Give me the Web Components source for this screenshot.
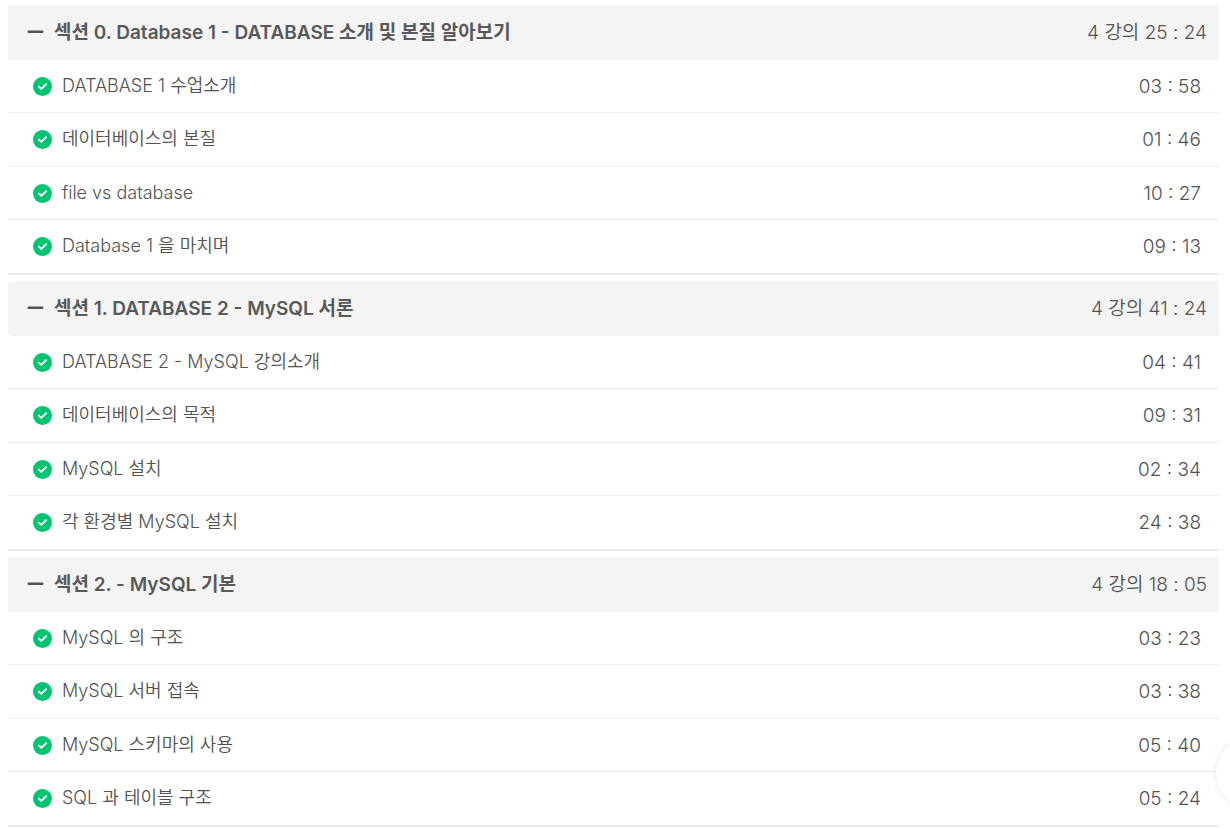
<!DOCTYPE html>
<html lang="ko">
<head>
<meta charset="utf-8">
<meta name="viewport" content="width=device-width, initial-scale=1">
<title>커리큘럼</title>
<style>
	body {
		margin: 5px 11px 0 8px;
		background: #fff;
		color: #525252;
		font-family: Inter, "Noto Sans CJK KR", sans-serif;
	}
</style>
</head>
<body>
<course-curriculum></course-curriculum>
<floating-button></floating-button>

<script>
const sections = [
	{
		title: "섹션 0. Database 1 - DATABASE 소개 및 본질 알아보기",
		time: "25 : 24",
		lectures: [
			["DATABASE 1 수업소개", "03 : 58"],
			["데이터베이스의 본질", "01 : 46"],
			["file vs database", "10 : 27"],
			["Database 1 을 마치며", "09 : 13"],
		],
	},
	{
		title: "섹션 1. DATABASE 2 - MySQL 서론",
		time: "41 : 24",
		lectures: [
			["DATABASE 2 - MySQL 강의소개", "04 : 41"],
			["데이터베이스의 목적", "09 : 31"],
			["MySQL 설치", "02 : 34"],
			["각 환경별 MySQL 설치", "24 : 38"],
		],
	},
	{
		title: "섹션 2. - MySQL 기본",
		time: "18 : 05",
		lectures: [
			["MySQL 의 구조", "03 : 23"],
			["MySQL 서버 접속", "03 : 38"],
			["MySQL 스키마의 사용", "05 : 40"],
			["SQL 과 테이블 구조", "05 : 24"],
		],
	},
];

class LectureRow extends HTMLElement {
	constructor() {
		super();
		this.attachShadow({ mode: "open" });
		this.shadowRoot.innerHTML = `
			<style>
				:host {
					display: flex;
					align-items: center;
					min-height: 52px;
					padding: 0 18px 0 25px;
					border-bottom: 1px solid #ededed;
				}

				:host(:nth-child(even)) {
					padding-bottom: 1px;
				}

				:host(:last-child) {
					border-bottom-width: 2px;
				}

				svg {
					flex: none;
					width: 19px;
					height: 19px;
					margin-top: 1px;
				}

				.title {
					flex: 1;
					margin-left: 10px;
					font-size: 18px;
					font-weight: 350;
					line-height: 24px;
				}

				.time {
					margin-top: 1px;
					font-size: 19px;
					font-weight: 350;
					line-height: 24px;
				}
			</style>
			<svg viewBox="0 0 19 19" aria-hidden="true">
				<circle cx="9.5" cy="9.5" r="9.5" fill="#00c471"/>
				<path d="M5.9 9.6l2.4 2.3 4.8-4.6" fill="none" stroke="#fff" stroke-width="2" stroke-linecap="round" stroke-linejoin="round"/>
			</svg>
			<span class="title"><slot></slot></span>
			<span class="time"><slot name="time"></slot></span>
		`;
	}
}

class CurriculumSection extends HTMLElement {
	constructor() {
		super();
		this.attachShadow({ mode: "open" });
		this.shadowRoot.innerHTML = `
			<style>
				:host {
					display: block;
				}

				h2 {
					margin: 0;
				}

				button {
					display: flex;
					align-items: center;
					width: 100%;
					min-height: 55px;
					padding: 0 12px 0 19px;
					border: none;
					border-radius: 3px;
					background: #f4f4f4;
					color: inherit;
					font-family: inherit;
					text-align: left;
					cursor: pointer;
				}

				svg {
					flex: none;
					width: 17px;
					height: 17px;
				}

				.vertical {
					display: none;
				}

				button[aria-expanded="false"] .vertical {
					display: inline;
				}

				.title {
					flex: 1;
					margin-left: 10px;
					color: #595959;
					font-size: 19px;
					font-weight: 600;
					line-height: 24px;
				}

				.info {
					font-size: 19px;
					font-weight: 350;
					line-height: 24px;
				}
			</style>
			<h2>
				<button type="button" aria-expanded="true" aria-controls="lectures">
					<svg viewBox="0 0 17 17" fill="none" stroke="currentColor" stroke-width="2.4" stroke-linecap="round" aria-hidden="true">
						<path d="M1.7 7.8h13.6"/>
						<path class="vertical" d="M8.5 1v13.6"/>
					</svg>
					<span class="title"><slot name="title"></slot></span>
					<span class="info"><slot name="info"></slot></span>
				</button>
			</h2>
			<div id="lectures"><slot></slot></div>
		`;
	}

	connectedCallback() {
		const button = this.shadowRoot.querySelector("button");
		const list = this.shadowRoot.getElementById("lectures");
		button.addEventListener("click", () => {
			list.hidden = !list.hidden;
			button.setAttribute("aria-expanded", String(!list.hidden));
		});
	}
}

class CourseCurriculum extends HTMLElement {
	constructor() {
		super();
		this.attachShadow({ mode: "open" });
	}

	connectedCallback() {
		this.render();
	}

	render() {
		this.shadowRoot.innerHTML = `
			<style>
				:host {
					display: flex;
					flex-direction: column;
					gap: 6px;
				}
			</style>
			${sections.map((section) => `
				<curriculum-section>
					<span slot="title">${section.title}</span>
					<span slot="info">${section.lectures.length} 강의 ${section.time}</span>
					<div>${section.lectures.map(([title, time]) => `<lecture-row>${title}<span slot="time">${time}</span></lecture-row>`).join("")}</div>
				</curriculum-section>
			`).join("")}
		`;
	}
}

// Round launcher resting half outside the right edge of the window
class FloatingButton extends HTMLElement {
	constructor() {
		super();
		this.attachShadow({ mode: "open" });
		this.shadowRoot.innerHTML = `
			<style>
				:host {
					position: fixed;
					right: -58px;
					bottom: 20px;
				}

				button {
					display: block;
					width: 72px;
					height: 72px;
					padding: 0;
					border: none;
					border-radius: 50%;
					background: #fff;
					box-shadow: 0 0 6px rgba(0, 0, 0, 0.1);
					cursor: pointer;
				}
			</style>
			<button type="button" aria-label="문의하기"></button>
		`;
	}
}

customElements.define("lecture-row", LectureRow);
customElements.define("curriculum-section", CurriculumSection);
customElements.define("course-curriculum", CourseCurriculum);
customElements.define("floating-button", FloatingButton);
</script>
</body>
</html>
